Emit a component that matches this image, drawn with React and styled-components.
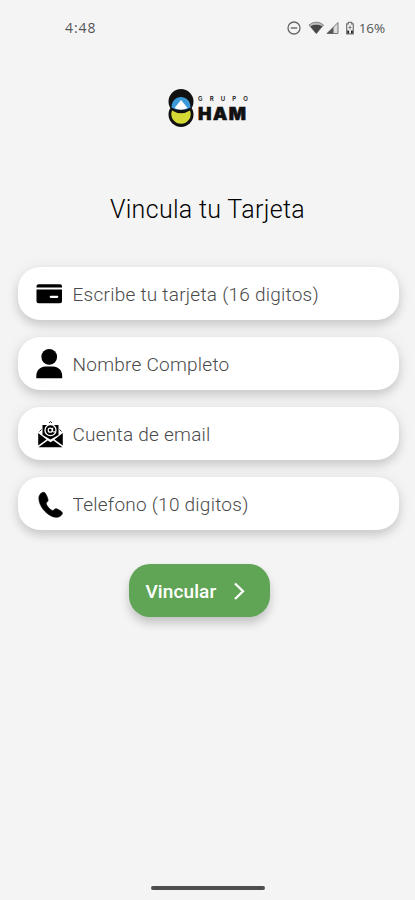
import { useState } from 'react';
import styled, { createGlobalStyle } from 'styled-components';

const GlobalStyle = createGlobalStyle`
  body {
    margin: 0;
    background-color: #f4f4f4;
    font-family: Roboto, 'Liberation Sans', sans-serif;
  }
`;

const Container = styled.div`
  height: 900px;
  display: flex;
  flex-direction: column;
  align-items: center;
  background-color: #f4f4f4;
  overflow: hidden;
`;

const StatusBar = styled.header`
  width: 100%;
  height: 56px;
  padding: 0 30px 0 65px;
  box-sizing: border-box;
  display: flex;
  align-items: center;
  justify-content: space-between;
  color: #555;
  font-family: 'Open Sans', sans-serif;
  font-size: 14px;
  font-weight: 500;
`;

const Clock = styled.span`
  margin-top: -1px;
  letter-spacing: 0.9px;
`;

const StatusIcons = styled.div`
  display: flex;
  align-items: center;
`;

const Battery = styled.span`
  margin: -1px 0 0 2px;
  font-size: 13.5px;
  letter-spacing: -0.1px;
`;

const Logo = styled.div`
  height: 40px;
  margin: 32px 0 0 1px;
  display: flex;
  align-items: flex-start;
`;

const LogoText = styled.div`
  width: 50px;
  margin: 7px 0 0 4px;
  font-family: Inter, sans-serif;
  color: #111;
`;

const Group = styled.div`
  display: flex;
  justify-content: space-between;
  font-size: 6px;
  line-height: 7px;
  font-weight: 600;
`;

const Brand = styled.div`
  margin-top: 3px;
  font-size: 18px;
  line-height: 18px;
  font-weight: 900;
  letter-spacing: 1.5px;
  -webkit-text-stroke: 0.6px #111;
`;

const Title = styled.h1`
  margin: 67px 0 0;
  font-size: 25px;
  line-height: 30px;
  font-weight: 300;
  letter-spacing: 0.32px;
  color: #000;
`;

const Form = styled.form`
  width: 381px;
  margin: 42px 0 0 1px;
  display: flex;
  flex-direction: column;
  gap: 17px;
`;

const Field = styled.label`
  height: 53px;
  padding: 0 18px;
  box-sizing: border-box;
  display: flex;
  align-items: center;
  gap: 10px;
  border-radius: 22px;
  background-color: white;
  box-shadow: 0 5px 10px rgba(0, 0, 0, 0.15), 0 1px 18px rgba(0, 0, 0, 0.06);
`;

const Input = styled.input`
  flex: 1;
  min-width: 0;
  padding: 2px 0 0;
  border: none;
  outline: none;
  background: transparent;
  font-family: inherit;
  font-size: 19px;
  font-weight: 300;
  letter-spacing: 0.25px;
  color: #222;

  &::placeholder {
    color: #4a4a4a;
    opacity: 1;
  }
`;

const Button = styled.button`
  width: 141px;
  height: 53px;
  margin: 17px 0 0 111px;
  padding: 2px 24px 0 17px;
  display: flex;
  align-items: center;
  justify-content: space-between;
  border: none;
  border-radius: 21px;
  background-color: #5fa555;
  box-shadow: 0 6px 10px rgba(0, 0, 0, 0.2);
  color: white;
  font-family: inherit;
  font-size: 19px;
  font-weight: 500;
  letter-spacing: 0.1px;
  cursor: pointer;
`;

const HomeBar = styled.div`
  width: 114px;
  height: 4px;
  margin: auto 0 10.5px;
  border-radius: 2px;
  background-color: #4d4d4d;
`;

const StatusGlyphs = () => (
  <svg width="70" height="16" viewBox="0 0 70 16" fill="none">
    <circle cx="7" cy="8" r="6" stroke="#666" strokeWidth="1.3" />
    <path d="M3.8 8h6.4" stroke="#666" strokeWidth="1.4" />
    <path d="M22 5Q29.300-.8 36.600 5L29.300 13.700Z" stroke="#888" fill="#bbb" />
    <path d="M23.300 6.200Q29.300 3.500 35.300 6.200L29.300 13.500Z" fill="#444" />
    <path d="M51 2.500V13.500H40Z" stroke="#777" fill="#ddd" />
    <path d="M46.500 7V13.500H40Z" fill="#555" />
    <path d="M61.300 2.300h3.400v1.500h1.600v10h-6.600v-10h1.600z" stroke="#777" strokeWidth="1.300" />
    <path d="M60.300 10.500h1.800v3h-1.800zM64 10.500h1.800v3H64z" fill="#222" />
    <path d="M63 5.500v4M61.500 7.500h3" stroke="#777" />
  </svg>
);

const LogoMark = () => (
  <svg width="26" height="40" viewBox="0 0 26 40">
    <circle cx="13" cy="13.500" r="12.500" fill="#111" />
    <circle cx="13" cy="26.500" r="12.500" fill="#111" />
    <path d="M3.500 19.500C3.500 5.500 22.500 5.500 22.500 19.500L18 21.500H8Z" fill="#3c9ad9" />
    <path d="M6.500 20L13 12L19.500 20Q13 23.500 6.500 20Z" fill="#fff" />
    <path d="M4 22.500Q13 28 22 22.500A9.700 9.700 0 1 1 4 22.500Z" fill="#d5da35" />
  </svg>
);

const CardIcon = () => (
  <svg width="27" height="28" viewBox="0 0 27 28">
    <path d="M2.500 4.200h21.500a2 2 0 0 1 2 2v1.300H.5V6.200a2 2 0 0 1 2-2z" />
    <path d="M.5 9.500H26v11.700a2 2 0 0 1-2 2H2.500a2 2 0 0 1-2-2zM14.800 15.700a1 1 0 0 0 0 2.300h6.400a1 1 0 0 0 0-2.300z" fillRule="evenodd" />
  </svg>
);

const UserIcon = () => (
  <svg width="27" height="32" viewBox="0 0 27 32">
    <circle cx="13.200" cy="8.800" r="7.900" />
    <path d="M.3 30.300V28C.3 22 5 18.500 9 18.500h8.500c4 0 8.700 3.500 8.700 9.500v2.300z" />
  </svg>
);

const MailIcon = () => (
  <svg width="27" height="30" viewBox="0 0 27 30">
    <g transform="translate(1 .5)">
      <path d="M5.500 5.500h16v10L13.500 20L5.500 15.500z" />
      <circle cx="13.500" cy="10.700" r="5.500" fill="none" stroke="#fff" strokeWidth="1.300" />
      <circle cx="13.200" cy="10.700" r="2" fill="none" stroke="#fff" strokeWidth="1.200" />
      <path d="M15.600 8.300v3.500q1 1.500 2.600 0" fill="none" stroke="#fff" strokeWidth="1.100" />
      <path d="M12 3.500l1.500-1.600L15 3.500M2.500 12l2-2M24.500 12l-2-2" fill="none" stroke="#222" />
      <path d="M1.200 13.500L9.500 20L1.200 26zM25.800 13.500L17.500 20L25.800 26z" />
      <path d="M1.500 27.700L10.700 21L13.500 22.800L16.300 21L25.500 27.700z" />
    </g>
  </svg>
);

const PhoneIcon = () => (
  <svg width="27" height="28" viewBox="0 0 27 28">
    <path
      transform="translate(.8 .8)"
      d="M7.200 1.500C5.600 1.300 3 3 2.400 5.200C1.100 9.500 3.600 15.700 7.800 20.200C12.200 24.800 17.500 27.300 21.500 26.300C23.600 25.800 25.600 23.800 25.600 22.300C25.600 20.600 20.500 17.800 19 17.900C17.500 18 16.900 20 15.600 19.700C13.300 19 9.900 15.100 9.400 13C9.100 11.600 11.200 11.100 11.300 9.500C11.400 8 8.900 1.700 7.200 1.500z"
      stroke="#000"
      strokeWidth=".6"
    />
  </svg>
);

const Chevron = () => (
  <svg width="13" height="20" viewBox="0 0 13 20" fill="none">
    <path d="M2 1.500L10 9.300L2 17" stroke="#fff" strokeWidth="2.300" />
  </svg>
);

const fields = [
  { name: 'card', placeholder: 'Escribe tu tarjeta (16 digitos)', Icon: CardIcon },
  { name: 'fullName', placeholder: 'Nombre Completo', Icon: UserIcon },
  { name: 'email', placeholder: 'Cuenta de email', Icon: MailIcon },
  { name: 'phone', placeholder: 'Telefono (10 digitos)', Icon: PhoneIcon },
];

const App = () => {
  const [values, setValues] = useState({});
  const handleChange = (e) =>
    setValues({ ...values, [e.target.name]: e.target.value });

  return (
    <Container>
      <GlobalStyle />
      <StatusBar>
        <Clock>4:48</Clock>
        <StatusIcons>
          <StatusGlyphs />
          <Battery>16%</Battery>
        </StatusIcons>
      </StatusBar>
      <Logo>
        <LogoMark />
        <LogoText>
          <Group>
            {'GRUPO'.split('').map((letter) => (
              <span key={letter}>{letter}</span>
            ))}
          </Group>
          <Brand>HAM</Brand>
        </LogoText>
      </Logo>
      <Title>Vincula tu Tarjeta</Title>
      <Form onSubmit={(e) => e.preventDefault()}>
        {fields.map(({ name, placeholder, Icon }) => (
          <Field key={name}>
            <Icon />
            <Input
              name={name}
              placeholder={placeholder}
              value={values[name] || ''}
              onChange={handleChange}
            />
          </Field>
        ))}
        <Button type="submit">
          Vincular
          <Chevron />
        </Button>
      </Form>
      <HomeBar />
    </Container>
  );
};

export default App;
